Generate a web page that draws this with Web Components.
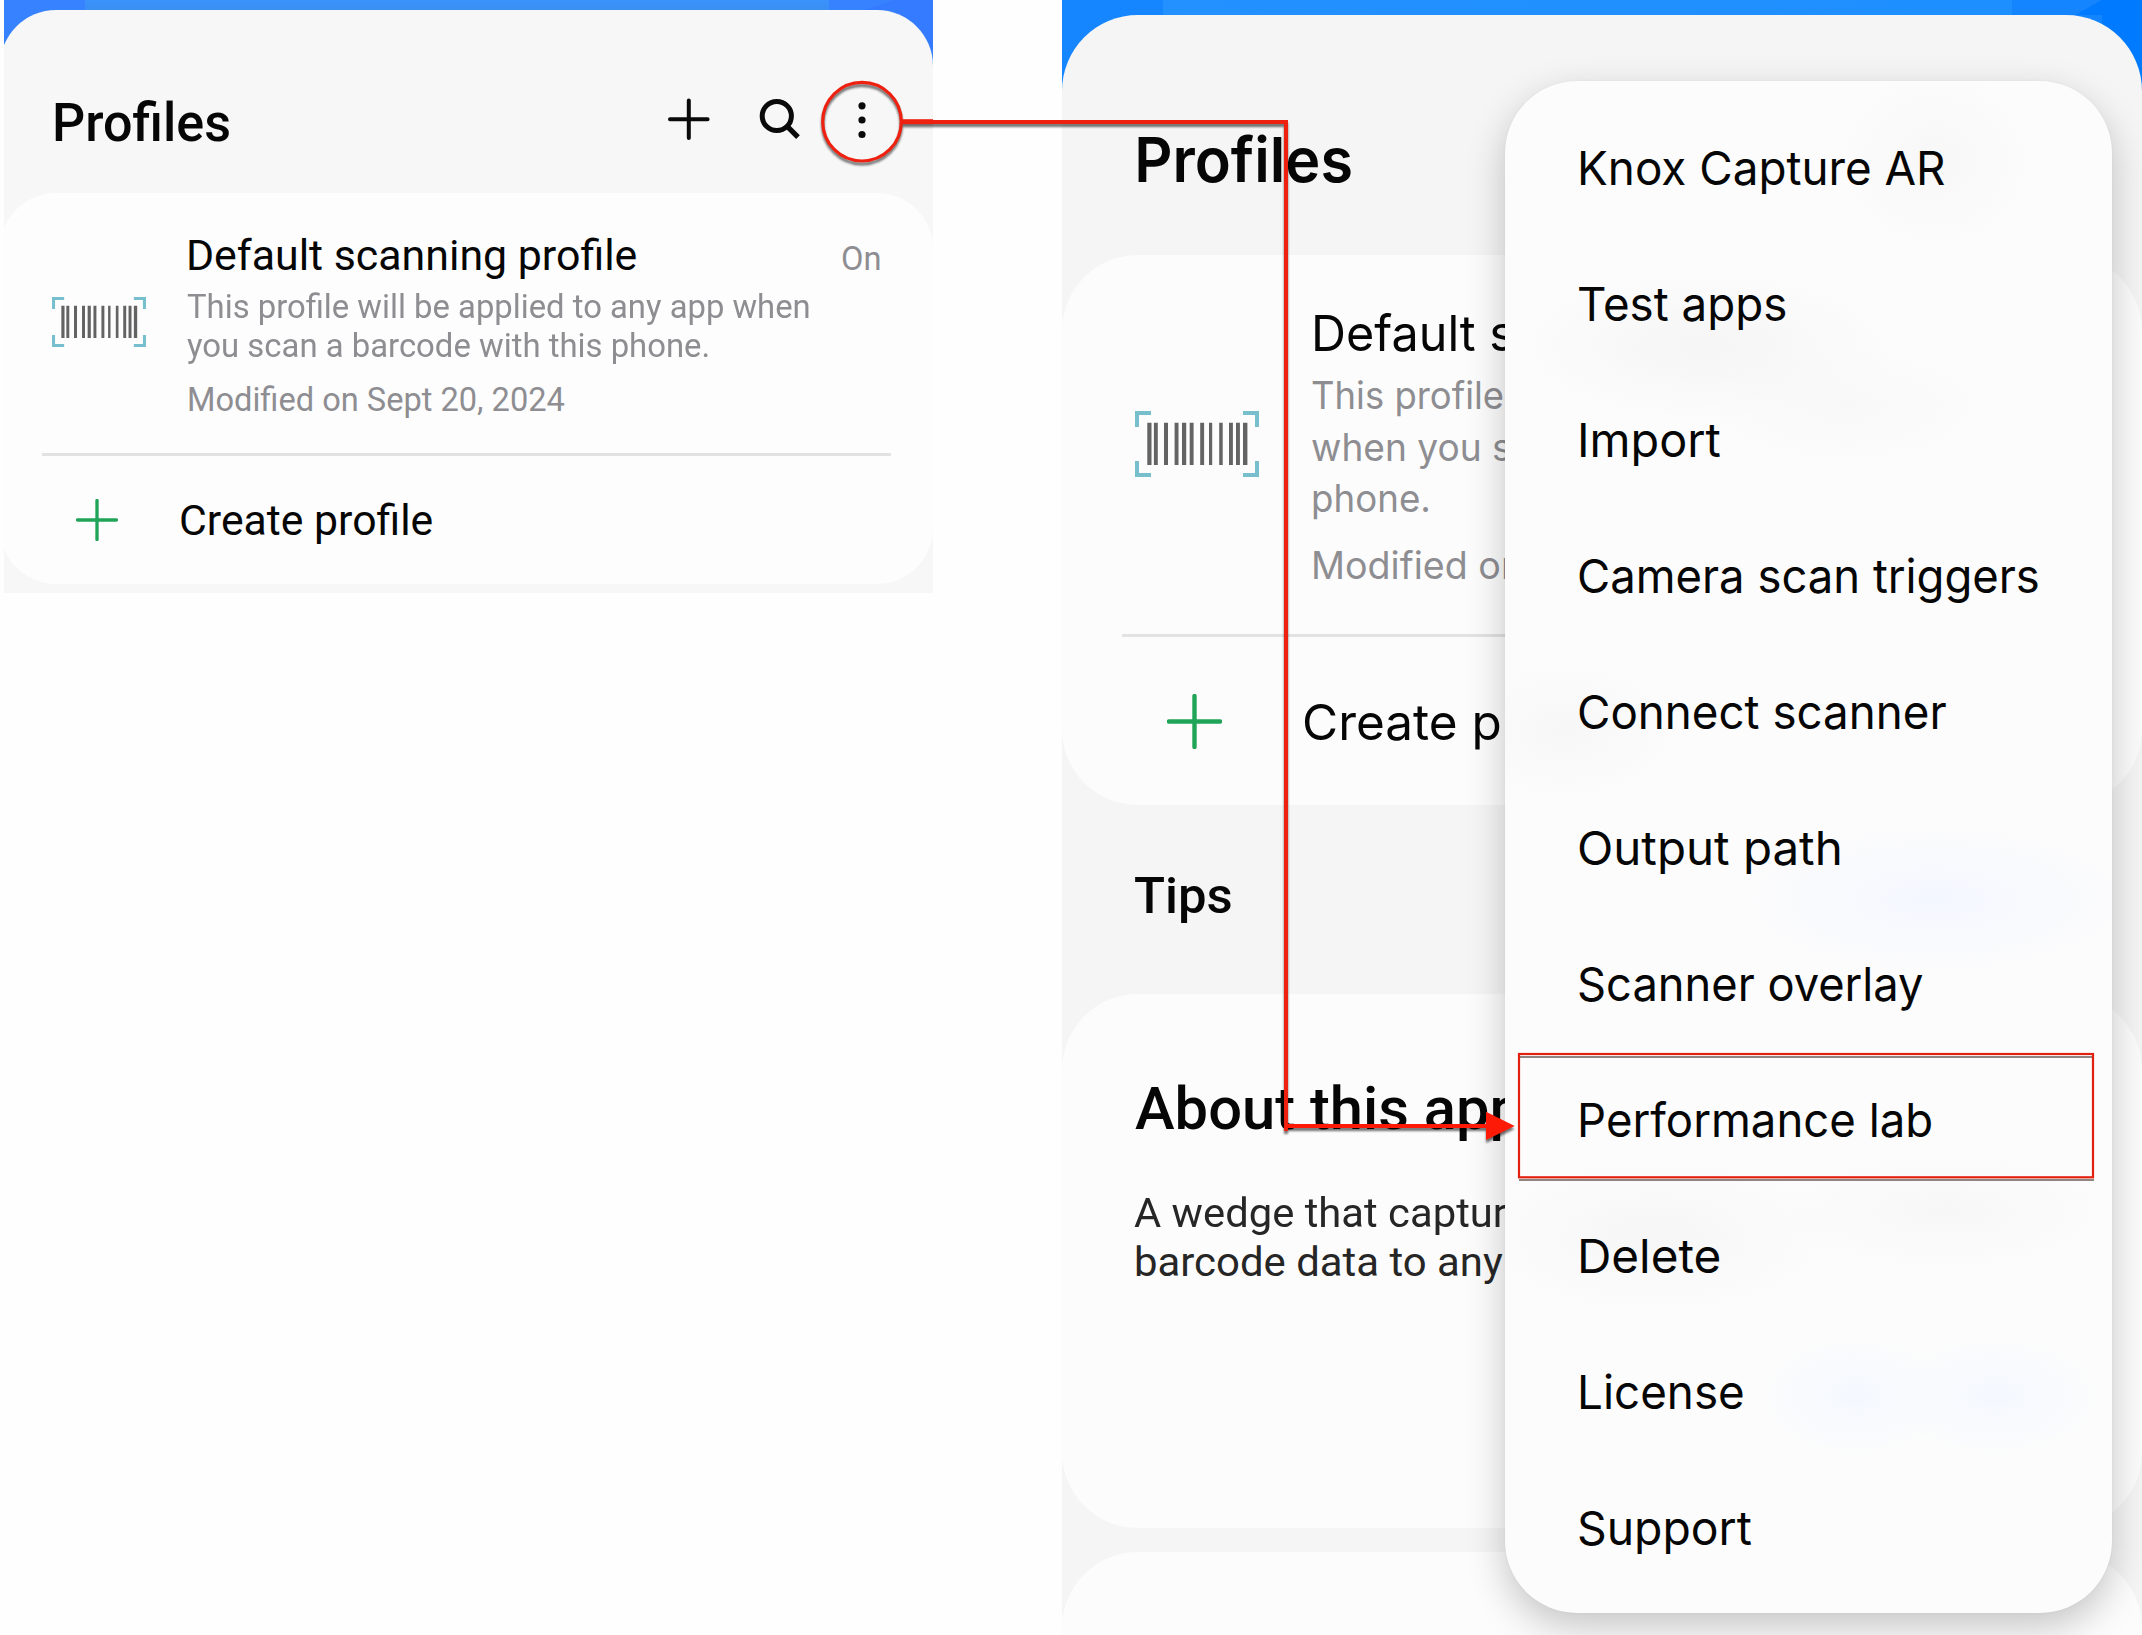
<!DOCTYPE html>
<html lang="en">
<head>
<meta charset="utf-8">
<title>Knox Capture – Performance lab</title>
<style>
html,body{margin:0;background:#fefefe}
body{width:2142px;height:1635px;overflow:hidden;font-family:Roboto,sans-serif;color:#060606}
</style>
</head>
<body>
<guide-stage>
  <phone-screen slot="before" class="small">
    <screen-header slot="header">
      <ui-label size="53.5" weight="500" lh="60" ink="174.5">Profiles</ui-label>
      <ui-icon slot="actions" name="plus"></ui-icon>
      <ui-icon slot="actions" name="search"></ui-icon>
      <ui-icon slot="actions" name="more"></ui-icon>
    </screen-header>
    <profile-card>
      <ui-label slot="title" size="42" lh="48" ink="447">Default scanning profile</ui-label>
      <ui-label slot="state" size="33" lh="38" ink="37.3" tone="muted">On</ui-label>
      <ui-label slot="text" size="33" lh="38.6" ink="621.5" tone="muted">This profile will be applied to any app when</ui-label>
      <ui-label slot="text" size="33" lh="38.6" ink="521.5" tone="muted">you scan a barcode with this phone.</ui-label>
      <ui-label slot="date" size="33" lh="38.6" ink="375.3" tone="muted">Modified on Sept 20, 2024</ui-label>
      <ui-label slot="create" size="42" lh="48" ink="251">Create profile</ui-label>
    </profile-card>
  </phone-screen>

  <phone-screen slot="after" class="large">
    <screen-header slot="header">
      <ui-label font="Inter" size="62" weight="600" lh="70" ink="213">Profiles</ui-label>
    </screen-header>
    <profile-card>
      <ui-label slot="title" font="Inter" size="49.5" lh="60" ink="160.5" fit="Default">Default s</ui-label>
      <ui-label slot="text" font="Inter" size="38" lh="51.7" ink="191" tone="muted" nudge="-.7">This profile</ui-label>
      <ui-label slot="text" font="Inter" size="38" lh="51.7" ink="167.2" fit="when you" tone="muted" nudge="-.7">when you s</ui-label>
      <ui-label slot="text" font="Inter" size="38" lh="51.7" ink="115" tone="muted">phone.</ui-label>
      <ui-label slot="date" font="Inter" size="38" lh="50" ink="151.5" fit="Modified" tone="muted" nudge=".7">Modified on</ui-label>
      <ui-label slot="create" font="Inter" size="49.5" lh="60" ink="151.7" fit="Create">Create pr</ui-label>
    </profile-card>
    <section-title><ui-label size="50" weight="500" lh="60" ink="96">Tips</ui-label></section-title>
    <about-card>
      <ui-label slot="title" size="58.6" weight="500" lh="70" ink="271.7" fit="About this">About this app</ui-label>
      <ui-label size="41" lh="49" ink="242.3" fit="A wedge that" tone="body" nudge="-.7">A wedge that captur</ui-label>
      <ui-label size="41" lh="49" ink="366.4" tone="body" nudge="1.3">barcode data to any</ui-label>
    </about-card>
    <blank-card></blank-card>
    <popup-menu slot="menu">
      <menu-item ink="363.5" nudge="2.3">Knox Capture AR</menu-item>
      <menu-item ink="206.6">Test apps</menu-item>
      <menu-item ink="139.5" nudge="2.8">Import</menu-item>
      <menu-item ink="459.2">Camera scan triggers</menu-item>
      <menu-item ink="367">Connect scanner</menu-item>
      <menu-item ink="261">Output path</menu-item>
      <menu-item ink="344.2">Scanner overlay</menu-item>
      <menu-item ink="350.5" nudge="2.3">Performance lab</menu-item>
      <menu-item ink="138" nudge="2.3">Delete</menu-item>
      <menu-item ink="161.5" nudge="2">License</menu-item>
      <menu-item ink="172.5">Support</menu-item>
    </popup-menu>
  </phone-screen>

  <callout-path slot="callout"></callout-path>
</guide-stage>

<script>
const define = (name, html, connected) => {
  const tpl = document.createElement('template');
  tpl.innerHTML = html;
  customElements.define(name, class extends HTMLElement {
    constructor() {
      super();
      this.attachShadow({ mode: 'open' }).append(tpl.content.cloneNode(true));
    }
    connectedCallback() { if (connected) connected.call(this, this.shadowRoot); }
  });
};

/* One line of text, stretched so that its inked width equals the "ink" attribute.
   "fit" names the part of the line that the width refers to. */
const ctx = document.createElement('canvas').getContext('2d');
define('ui-label', `<style>
:host{display:block;flex:none}
span{display:block;width:max-content;white-space:pre;transform-origin:0 0}
:host([tone=muted]){color:#8e8e92}
:host([tone=body]){color:#262626}
</style><span><slot></slot></span>`, function (root) {
  const a = n => this.getAttribute(n);
  const size = +a('size'), weight = a('weight') || 400, font = a('font') || 'Roboto';
  const lh = a('lh') + 'px';
  this.style.cssText = `font:${weight} ${size}px/${lh} ${font},sans-serif;height:${lh};margin-left:${a('nudge') || 0}px`;
  ctx.font = `${weight} ${size}px ${font}, sans-serif`;
  const m = ctx.measureText(a('fit') || this.textContent);
  const k = +a('ink') / (m.actualBoundingBoxLeft + m.actualBoundingBoxRight);
  root.querySelector('span').style.transform = `translateX(${m.actualBoundingBoxLeft * k}px) scaleX(${k})`;
  if (!a('fit')) this.style.width = a('ink') + 'px';
});

define('ui-icon', `
<style>
:host{display:block;width:48px;height:48px}
:host([name=plus]){margin-right:3px}
svg{display:none;width:48px;height:48px;overflow:visible;fill:none;stroke:#0a0a0a}
:host([name=plus]) .plus,:host([name=search]) .search,:host([name=more]) .more{display:block}
</style>
<svg class="plus" viewBox="0 0 48 48" stroke-width="4" stroke-linecap="round"><path d="M5 24.2H42.6M23.8 5.4V43"/></svg>
<svg class="search" viewBox="0 0 48 48" stroke-width="5"><circle cx="23.8" cy="21" r="14.6"/><path d="M34.2 31.4L45 42.2" stroke-width="5.2"/></svg>
<svg class="more" viewBox="0 0 48 48" style="fill:#0a0a0a;stroke:none"><circle cx="24" cy="10.8" r="3.6"/><circle cx="24" cy="25" r="3.6"/><circle cx="24" cy="39.5" r="3.6"/></svg>`);

define('barcode-icon', `
<style>
:host{display:block;flex:none}
svg{display:block;width:100%;height:100%}
</style>
<svg viewBox="0 0 124 66">
<path d="M2 16V2H16M108 2H122V16M122 50V64H108M16 64H2V50" fill="none" stroke="#78bfcd" stroke-width="4"/>
<path fill="#636363" d="M12.3 11.7h4.2v42.3h-4.2zM18.9 11.7h3.9v42.3h-3.9zM29 11.7h4v42.3h-4zM39.6 11.7h3.9v42.3h-3.9zM47 11.7h4.2v42.3H47zM54.7 11.7h3.9v42.3h-3.9zM65.2 11.7h3.9v42.3h-3.9zM74 11.7h3.2v42.3H74zM84.2 11.7h3.5v42.3h-3.5zM94 11.7h3.9v42.3H94zM101 11.7h3.9v42.3H101zM108 11.7h4.4v42.3H108z"/>
</svg>`);

define('screen-header', `
<style>
:host{display:flex;flex:none;box-sizing:border-box;height:var(--header-h);padding:var(--header-pad);align-items:flex-start}
.actions{display:flex;margin:2px 0 0 auto;gap:37px}
</style>
<slot></slot><div class="actions"><slot name="actions"></slot></div>`);

define('profile-card', `
<style>
:host{display:flex;flex-direction:column;box-sizing:border-box;flex:none;height:var(--card-h);background:var(--card);border-radius:var(--r)}
.profile{display:flex;height:var(--profile-h);box-sizing:border-box;flex:none;padding:var(--profile-pad)}
barcode-icon{width:var(--bc-w);height:var(--bc-h);margin-top:var(--bc-top);margin-right:var(--bc-gap)}
.copy{flex:1;min-width:0}
.head{display:flex;justify-content:space-between;padding-left:var(--title-x)}
.state{margin-top:8px}
.text{margin-top:var(--text-gap)}
.date{margin:var(--date-gap) 0 0 var(--date-x)}
hr{flex:none;height:3px;border:0;background:#e2e2e2;margin:var(--hr-margin)}
.create{flex:1;display:flex;align-items:center;padding-left:var(--plus-x);gap:var(--create-gap)}
.create svg{width:var(--plus-size);height:var(--plus-size);flex:none}
.create div{padding-top:2.4px}
</style>
<div class="profile">
  <barcode-icon></barcode-icon>
  <div class="copy">
    <div class="head"><slot name="title"></slot><div class="state"><slot name="state"></slot></div></div>
    <div class="text"><slot name="text"></slot></div>
    <div class="date"><slot name="date"></slot></div>
  </div>
</div>
<hr>
<div class="create"><svg viewBox="0 0 55 55"><path d="M2 27.5H53M27.5 2V53" stroke="#20a558" stroke-width="4.4" stroke-linecap="round"/></svg><div><slot name="create"></slot></div></div>`);

define('section-title', `
<style>:host{display:block;box-sizing:border-box;flex:none;height:188.5px;padding:61px 0 0 73px}</style><slot></slot>`);

define('about-card', `
<style>
:host{display:block;box-sizing:border-box;flex:none;height:534.5px;padding:80px 0 0 73px;background:var(--card);border-radius:var(--r)}
.body{margin-top:45px}
</style>
<slot name="title"></slot><div class="body"><slot></slot></div>`);

define('blank-card', `
<style>:host{display:block;flex:none;height:240px;margin-top:24px;background:var(--card);border-radius:var(--r)}</style>`);

define('menu-item', `
<style>:host{display:flex;align-items:center;height:136px;padding-left:73.5px}</style>
<div></div>`, function (root) {
  const l = document.createElement('ui-label');
  for (const [k, v] of Object.entries({ font: 'Inter', size: '46.8', lh: '60', ink: this.getAttribute('ink'), nudge: this.getAttribute('nudge') || '0' })) l.setAttribute(k, v);
  l.textContent = this.textContent;
  root.querySelector('div').replaceWith(l);
});

define('popup-menu', `
<style>
:host{display:block;position:absolute;left:443px;top:81px;width:606.5px;height:1532px;box-sizing:border-box;padding:19.3px 0 0;border-radius:72px;
box-shadow:0 0 3px rgba(0,0,0,.04),0 14px 38px rgba(0,0,0,.22);
background:
radial-gradient(100px 90px at 430px 80px,#f7f7f7,#f7f7f700),
radial-gradient(190px 75px at 200px 265px,#f5f5f5,#f5f5f500),
radial-gradient(150px 60px at 340px 325px,#f8f8f8,#f8f8f800),
radial-gradient(120px 70px at 60px 650px,#f7f7f7,#f7f7f700),
radial-gradient(210px 80px at 430px 818px,#f3f7ff,#f8f9feb0 55%,#fafafe00),
radial-gradient(180px 80px at 150px 1155px,#f6f6f6,#f6f6f600),
radial-gradient(170px 60px at 440px 1130px,#f7f7f7,#f7f7f700),
radial-gradient(100px 62px at 350px 1315px,#f4f8ff,#f8f9fe00),
radial-gradient(110px 62px at 490px 1315px,#f4f8ff,#f8f9fe00),
#fcfcfc}
</style><slot></slot>`);

define('phone-screen', `
<style>
:host{display:block;position:relative;overflow:hidden;flex:none;box-sizing:border-box;--r:76px}
:host(.small){width:929px;height:593px;padding-top:10px;--r:56px;--bg:#f7f7f7;--card:#fdfdfd;
 background:linear-gradient(#3a92fb,#3a8ff2) 81px 0/744px 10px no-repeat,linear-gradient(to bottom right,transparent 50%,#357bff 50%) 860px 0/31px 10px no-repeat,linear-gradient(#357bff,#357bff) 891px 0/38px 50px no-repeat,#3782ff;
 --header-h:183px;--header-pad:83px 47px 0 54.6px;--sheet-m:0 0 0 -4px;--card-h:391px;
 --profile-h:260px;--profile-pad:38.6px 54px 0 52.3px;--bc-w:94px;--bc-h:50px;--bc-top:65.4px;--bc-gap:40.7px;
 --title-x:2.2px;--text-gap:8.6px;--date-gap:16px;--date-x:1.8px;--hr-margin:0 42px 0 42px;
 --plus-x:76px;--plus-size:42px;--create-gap:63.2px}
:host(.large){width:1080px;height:1635px;padding-top:15px;--bg:#f5f5f5;--card:#fcfcfc;
 background:linear-gradient(90deg,#2391ff,#1e8fff) 101px 0/849px 15px no-repeat,linear-gradient(to bottom right,transparent 50%,#007bff 50%) 1013px 0/27px 15px no-repeat,linear-gradient(#007bff,#007bff) 1040px 0/40px 100px no-repeat,linear-gradient(90deg,#1586ff 50%,#1484ff 50%);
 --header-h:240px;--header-pad:109.5px 0 0 76px;--sheet-m:0;--card-h:550px;
 --profile-h:379px;--profile-pad:48px 0 0 73px;--bc-w:124px;--bc-h:66px;--bc-top:108px;--bc-gap:53.5px;
 --title-x:2.5px;--text-gap:7.1px;--date-gap:15.2px;--date-x:.5px;--hr-margin:0 60px 0 60px;
 --plus-x:104.5px;--plus-size:55px;--create-gap:82px}
.sheet{display:flex;flex-direction:column;height:100%;margin:var(--sheet-m);background:var(--bg);border-radius:var(--r) var(--r) 0 0}
</style>
<div class="sheet"><slot name="header"></slot><slot></slot></div><slot name="menu"></slot>`);

define('callout-path', `
<style>
:host{display:block;position:absolute;inset:0;pointer-events:none}
svg{display:block;width:2142px;height:1635px}
.sh{filter:drop-shadow(0 3px 1.2px rgba(0,0,0,.55))}
</style>
<svg viewBox="0 0 2142 1635" fill="none" stroke="#ee2010">
<g class="sh">
<circle cx="862" cy="121.7" r="39.3" stroke-width="3.2"/>
<path d="M902 121.7H933" stroke-width="5"/>
<path d="M932 122H1286V1131" stroke-width="4"/>
<path d="M1286 1126H1490" stroke="#fd1a06" stroke-width="4.2"/>
<path d="M1486 1111.7L1514.7 1126L1486 1140Z" fill="#fd1a06" stroke="none"/>
</g>
<path d="M1519 1057H2093M1519 1180H2094" stroke="#8e8583" stroke-width="2.2"/>
<rect x="1519" y="1054" width="574" height="123.3" stroke="#e2200f" stroke-width="2.2"/>
</svg>`);

define('guide-stage', `
<style>
:host{display:flex;position:relative;align-items:flex-start;gap:129px;width:2142px;height:1635px;box-sizing:border-box;padding-left:4px;overflow:hidden}
</style>
<slot name="before"></slot><slot name="after"></slot><slot name="callout"></slot>`);
</script>
</body>
</html>
